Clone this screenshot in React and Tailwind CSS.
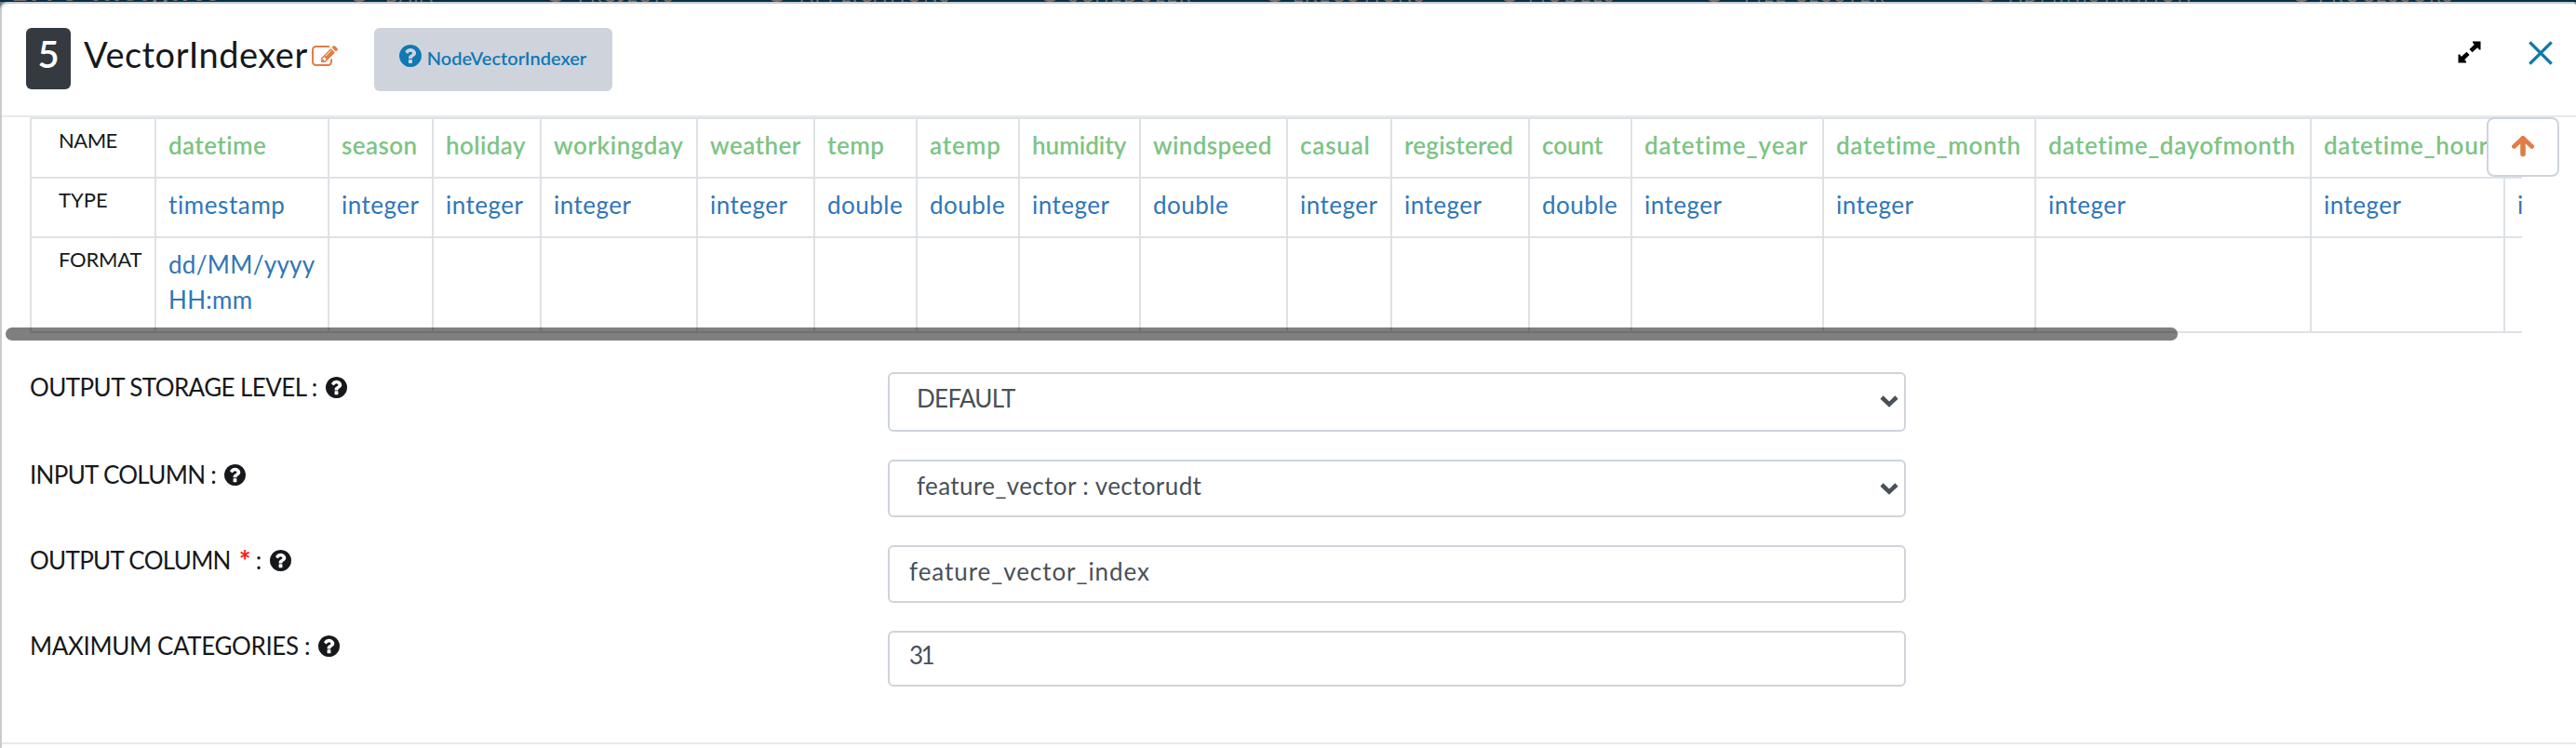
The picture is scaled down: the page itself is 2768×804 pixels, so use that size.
import React from "react";

const NAV = [
  { label: "DATA", box: "w-[211px]", text: "ml-[18px]" },
  { label: "PROJECTS", box: "w-[238px]", text: "ml-[14px] tracking-[1px]" },
  { label: "APPLICATIONS", box: "w-[293px]", text: "ml-[15px] tracking-[2px]" },
  { label: "SCHEDULER", box: "w-[242px]", text: "ml-[10px] tracking-[2px]" },
  { label: "EXECUTIONS", box: "w-[252px]", text: "ml-[9px] tracking-[2px]" },
  { label: "MODELS", box: "w-[220px]", text: "ml-[10px] tracking-[2px]" },
  { label: "FILE CLUSTER", box: "w-[293px]", text: "ml-[22px] tracking-[2px]" },
  { label: "ADMINISTRATION", box: "w-[338px]", text: "ml-[14px] tracking-[2px]" },
  { label: "PROCESSORS", box: "w-[259px]", text: "ml-[8px] tracking-[2px]" },
];

const COLUMNS = [
  { name: "datetime", type: "timestamp", format: ["dd/MM/yyyy", "HH:mm"], width: "w-[186px]", nameFit: "tracking-[0.4px]", typeFit: "tracking-[0.6px]" },
  { name: "season", type: "integer", width: "w-[112px]", nameFit: "tracking-[0.4px]" },
  { name: "holiday", type: "integer", width: "w-[116px]", nameFit: "tracking-[0.4px]" },
  { name: "workingday", type: "integer", width: "w-[168px]", nameFit: "tracking-[0.55px]" },
  { name: "weather", type: "integer", width: "w-[126px]", nameFit: "tracking-[0.45px]" },
  { name: "temp", type: "double", width: "w-[110px]", nameFit: "tracking-[0.5px]" },
  { name: "atemp", type: "double", width: "w-[110px]", nameFit: "tracking-[0.9px]" },
  { name: "humidity", type: "integer", width: "w-[130px]", nameFit: "tracking-[0px]" },
  { name: "windspeed", type: "double", width: "w-[158px]", nameFit: "tracking-[0.35px]" },
  { name: "casual", type: "integer", width: "w-[112px]", nameFit: "tracking-[0.8px]" },
  { name: "registered", type: "integer", width: "w-[148px]", nameFit: "tracking-[0.2px]" },
  { name: "count", type: "double", width: "w-[110px]", nameFit: "tracking-[-0.1px]" },
  { name: "datetime_year", type: "integer", width: "w-[206px]", nameFit: "tracking-[0.95px]" },
  { name: "datetime_month", type: "integer", width: "w-[228px]", nameFit: "tracking-[0.7px]" },
  { name: "datetime_dayofmonth", type: "integer", width: "w-[296px]", nameFit: "tracking-[0.65px]" },
  { name: "datetime_hour", type: "integer", width: "w-[208px]", nameFit: "tracking-[0.7px]" },
  { name: "", type: "integer", width: "w-[160px]", nameFit: "" },
];

function HelpIcon({ className }) {
  return (
    <svg viewBox="128 128 1536 1536" className={className} fill="currentColor">
      <path d="M1024 1376v-192q0-14-9-23t-23-9h-192q-14 0-23 9t-9 23v192q0 14 9 23t23 9h192q14 0 23-9t9-23zM1280 704q0-88-55.5-163t-138.5-116t-170-41q-243 0-371 213q-15 24 8 42l132 100q7 6 19 6q16 0 25-12q53-68 86-92q34-24 86-24q48 0 85.5 26t37.5 59q0 38-20 61t-68 45q-63 28-115.5 86.5t-52.5 125.5v36q0 14 9 23t23 9h192q14 0 23-9t9-23q0-19 21.5-49.5t54.5-49.5q32-18 49-28.5t46-35t44.5-48t28-60.5t12.5-81zM1664 896q0 209-103 385.5t-279.5 279.5t-385.5 103t-385.5-103t-279.5-279.5t-103-385.5t103-385.5t279.5-279.5t385.5-103t385.5 103t279.5 279.5t103 385.5z" />
    </svg>
  );
}

function EditIcon() {
  return (
    <svg viewBox="0 128 1792 1408" className="mt-[19px] ml-1 h-[22px] w-7 shrink-0 text-[#e27d46]" fill="currentColor">
      <path d="M888 1184l116-116-152-152-116 116v56h96v96h56zm440-720q-16-16-33 1l-350 350q-17 17-1 33t33-1l350-350q17-17 1-33zm80 594v190q0 119-84.5 203.5t-203.5 84.5h-832q-119 0-203.5-84.5t-84.5-203.5v-832q0-119 84.5-203.5t203.5-84.5h832q63 0 117 25 15 7 18 23 3 17-9 29l-49 49q-14 14-32 8-23-6-45-6h-832q-66 0-113 47t-47 113v832q0 66 47 113t113 47h832q66 0 113-47t47-113v-126q0-13 9-22l64-64q15-15 35-7t20 29zm-96-738l288 288-672 672h-288v-288zm444 132l-92 92-288-288 92-92q28-28 68-28t68 28l152 152q28 28 28 68t-28 68z" />
    </svg>
  );
}

function ExpandIcon() {
  return (
    <svg viewBox="0 0 25 24" className="mt-[14px] h-6 w-[25px]" fill="#000" stroke="#000">
      <path d="M16 0.5H24.5V9.5H23L21 7L18 4L16 2Z" stroke="none" />
      <path d="M20.5 4.5L14 10.6M11 13.4L4.5 19.5" strokeWidth="4.6" />
      <path d="M9 23.5H0.5V14.5H2L4 17L7 20L9 22Z" stroke="none" />
    </svg>
  );
}

function CloseIcon() {
  return (
    <svg viewBox="0 0 26 26" className="mt-[14px] ml-[51px] h-[26px] w-[26px]" fill="none" stroke="#0d79a8" strokeWidth="3.3">
      <path d="M1.3 1.3L24.7 24.7M24.7 1.3L1.3 24.7" />
    </svg>
  );
}

function TopNav() {
  return (
    <nav className="h-[2px] overflow-hidden bg-[#00304b]">
      <div className="-mt-4 flex h-5 pl-3 text-[20px] leading-5 text-[#77716d]">
        <div className="w-[364px] shrink-0 text-[32px] leading-[10px] font-bold tracking-[4px] whitespace-nowrap">Live Insights</div>
        {NAV.map((item) => (
          <div key={item.label} className={`flex shrink-0 whitespace-nowrap ${item.box}`}>
            <span className="h-[18px] w-5 shrink-0 rounded-full border-4 border-[#77716d]" />
            <span className={item.text}>{item.label}</span>
          </div>
        ))}
      </div>
    </nav>
  );
}

function Header() {
  return (
    <header className="flex h-[122px] items-start border-b-2 border-[#e6eaee] pt-[26px] pr-[25px] pl-[26px]">
      <div className="h-[66px] w-12 rounded-md bg-[#343a40] text-center text-[40px] leading-[56px] font-semibold text-white">5</div>
      <h1 className="ml-[14px] text-[38px] leading-[57px] tracking-[0.5px] text-[#16181b]">VectorIndexer</h1>
      <EditIcon />
      <a className="ml-[39px] flex h-[68px] w-64 items-start rounded-md bg-[#cfd4dc] pl-[27px] text-[#0f79b6]">
        <HelpIcon className="mt-[18px] h-6 w-6" />
        <span className="ml-[6px] text-[20px] leading-[64px] font-semibold">NodeVectorIndexer</span>
      </a>
      <div className="ml-auto flex">
        <ExpandIcon />
        <CloseIcon />
      </div>
    </header>
  );
}

function RowHead({ children, fit }) {
  return (
    <div className={`w-[134px] shrink-0 border-l-2 border-[#dee2e6] pt-1 pl-[29px] text-[22px] leading-[38px] text-[#16181b] ${fit}`}>
      {children}
    </div>
  );
}

function Cell({ width, className, children }) {
  return (
    <div className={`shrink-0 border-l-2 border-[#dee2e6] pt-[9px] pl-[13px] text-[26px] leading-[38px] whitespace-nowrap ${width} ${className}`}>
      {children}
    </div>
  );
}

function SchemaTable() {
  return (
    <section className="relative">
      <div className="ml-[30px] w-[2678px] overflow-hidden border-t-2 border-[#dee2e6]">
        <div className="flex h-16 w-[2800px] border-b-2 border-[#dee2e6]">
          <RowHead fit="tracking-[-0.5px]">NAME</RowHead>
          {COLUMNS.map((c, i) => (
            <Cell key={i} width={c.width} className={`font-semibold text-[#7dc484] ${c.nameFit}`}>{c.name}</Cell>
          ))}
        </div>
        <div className="flex h-16 w-[2800px] border-b-2 border-[#dee2e6]">
          <RowHead fit="tracking-[0px]">TYPE</RowHead>
          {COLUMNS.map((c, i) => (
            <Cell key={i} width={c.width} className={`text-[#2f76b8] ${c.typeFit || "tracking-[0.5px]"}`}>{c.type}</Cell>
          ))}
        </div>
        <div className="flex h-[102px] w-[2800px] border-b-2 border-[#dee2e6]">
          <RowHead fit="tracking-[-0.2px]">FORMAT</RowHead>
          {COLUMNS.map((c, i) => (
            <Cell key={i} width={c.width} className="text-[#2f76b8] tracking-[0.3px]">
              {c.format && c.format.map((line) => <div key={line}>{line}</div>)}
            </Cell>
          ))}
        </div>
      </div>
      <div className="absolute top-[226px] left-1 h-[14px] w-[2334px] rounded-full bg-black/50" />
      <button className="absolute top-0 left-[2670px] flex h-16 w-[78px] justify-center rounded-lg border-2 border-[#ced4da] bg-white pt-[17px]">
        <svg viewBox="0 0 24 24" className="h-6 w-6" fill="none" stroke="#e07d45" strokeLinecap="round" strokeLinejoin="round">
          <path d="M2.4 12.4L12 3.4L21.6 12.4" strokeWidth="4.8" />
          <path d="M12 4V20.4" strokeWidth="5.6" />
        </svg>
      </button>
    </section>
  );
}

function Field({ label, fit, required, children }) {
  return (
    <div className="flex items-start">
      <label className={`flex w-[922px] shrink-0 items-start text-[26px] leading-8 whitespace-pre text-[#16181b] ${fit}`}>
        {label}
        {required && <span className="ml-[9px] w-[18px] text-[30px] font-bold tracking-normal text-[#ff1616]">*</span>}
        {required ? ":" : " :"}
        <HelpIcon className="mt-[5px] ml-[9px] h-[23px] w-[23px]" />
      </label>
      {children}
    </div>
  );
}

function Select({ value, className }) {
  return (
    <div className={`flex w-[1094px] justify-between rounded-md border-2 border-[#ced4da] bg-white pr-[6px] pl-[29px] text-[26px] leading-[52px] text-[#495057] ${className}`}>
      <span>{value}</span>
      <svg viewBox="0 0 20 14" className="mt-[23px] h-[14px] w-5" fill="none" stroke="#495057" strokeWidth="4.6">
        <path d="M2 2L10 9.6L18 2" />
      </svg>
    </div>
  );
}

function Input({ value, className }) {
  return (
    <div className={`w-[1094px] rounded-md border-2 border-[#ced4da] bg-white pl-[21px] text-[26px] text-[#495057] ${className}`}>
      {value}
    </div>
  );
}

export default function App() {
  return (
    <div className="h-[804px] w-[2768px] overflow-hidden bg-[#77797b] font-['Lato','Liberation_Sans',sans-serif]">
      <TopNav />
      <main className="flex h-[802px] flex-col rounded-tl-[8px] rounded-tr-[4px] border-t-2 border-l-2 border-[#c9cbcc] bg-white">
        <Header />
        <SchemaTable />
        <form className="mt-[42px] flex h-[398px] flex-col gap-[30px] pl-[30px]">
          <Field label="OUTPUT STORAGE LEVEL" fit="tracking-[-0.58px]">
            <Select value="DEFAULT" className="h-16 tracking-[-0.7px]" />
          </Field>
          <Field label="INPUT COLUMN" fit="tracking-[-0.7px]">
            <Select value="feature_vector : vectorudt" className="h-[62px] tracking-[0.4px]" />
          </Field>
          <Field label="OUTPUT COLUMN" fit="tracking-[-0.7px]" required>
            <Input value="feature_vector_index" className="h-[62px] leading-[52px] tracking-[0.95px]" />
          </Field>
          <Field label="MAXIMUM CATEGORIES" fit="tracking-[-0.38px]">
            <Input value="31" className="h-[60px] leading-[48px] tracking-[-2.5px]" />
          </Field>
        </form>
        <footer className="h-[6px] shrink-0 border-t-2 border-[#e6eaee]" />
      </main>
    </div>
  );
}
